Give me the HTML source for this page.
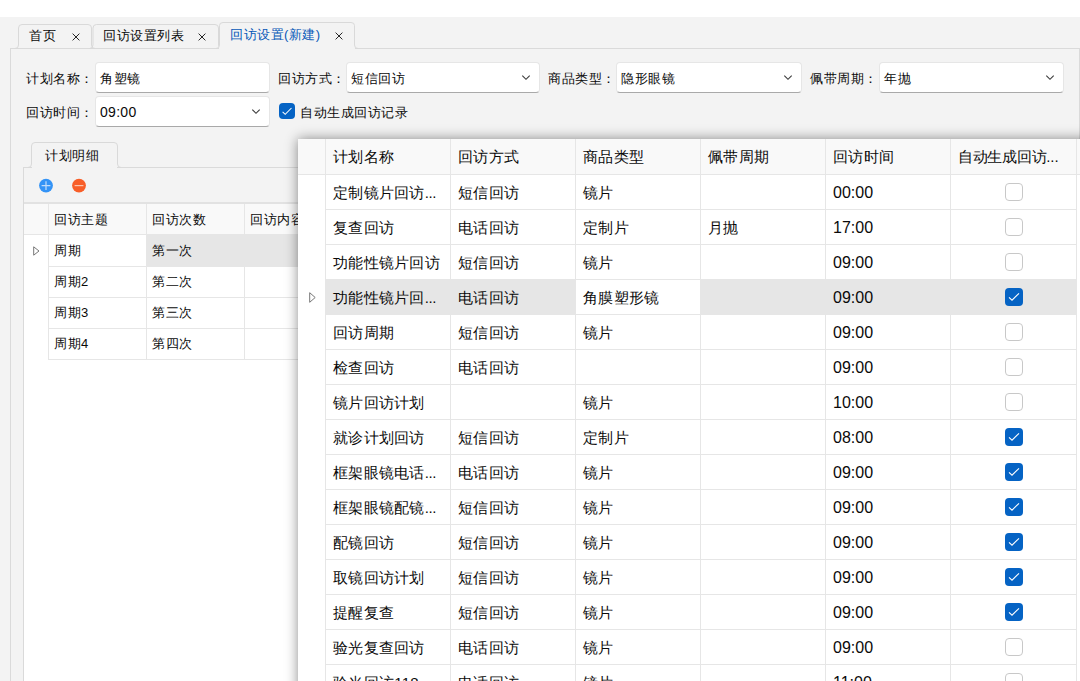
<!DOCTYPE html>
<html><head><meta charset="utf-8">
<style>
*{box-sizing:border-box;margin:0;padding:0}
html,body{width:1080px;height:681px;overflow:hidden}
body{position:relative;background:#f3f3f3;font-family:"Liberation Sans",sans-serif;font-size:13px;letter-spacing:0.5px;color:#0a0a0a}
.a{position:absolute}
.t{position:absolute;white-space:nowrap;line-height:16px;margin-left:-1px;margin-top:1px}
#topband{left:0;top:0;width:1080px;height:17px;background:#fff}
.tab{position:absolute;border:1px solid #dadada;border-bottom:none;border-radius:5px 5px 0 0;background:#f3f3f3}
#content{left:10px;top:48px;width:1070px;height:640px;border:1px solid #dadada;background:#f3f3f3}
.x{position:absolute;width:8px;height:8px}
.inp{position:absolute;background:#fff;border:1px solid #e6e6e6;border-bottom-color:#a9a9a9;border-radius:4px}
.chev{position:absolute}
.p{position:absolute;white-space:nowrap;line-height:18px;font-size:15px;letter-spacing:0.3px}
.cb{position:absolute;border-radius:4px}
.cb.on{background:#0563c4}
.cb.off{background:#fff;border:1px solid #c9c9c9}
</style></head><body>
<div class="a" id="topband"></div>
<div class="a" id="content"></div>
<svg class="a" style="left:0;top:0" width="1080" height="60" viewBox="0 0 1080 60">
<path d="M15 48.5Q18.5 48.5 18.5 45L18.5 28Q18.5 24.5 22 24.5L88 24.5Q91.5 24.5 91.5 28L91.5 45Q91.5 48.5 95 48.5" fill="none" stroke="#d9d9d9" stroke-width="1"/>
<path d="M89.5 48.5Q93 48.5 93 45L93 28Q93 24.5 96.5 24.5L215 24.5Q218.5 24.5 218.5 28L218.5 45Q218.5 48.5 222 48.5" fill="none" stroke="#d9d9d9" stroke-width="1"/>
<rect x="219" y="23" width="136" height="27" fill="#f3f3f3"/>
<path d="M216 48.5Q219.5 48.5 219.5 45L219.5 25.5Q219.5 22.5 223 22.5L351 22.5Q354.5 22.5 354.5 25.5L354.5 45Q354.5 48.5 358 48.5" fill="none" stroke="#d9d9d9" stroke-width="1"/>
</svg>

<!-- tabs -->



<div class="t" style="left:30px;top:27px">首页</div>
<div class="t" style="left:104px;top:27px">回访设置列表</div>
<div class="t" style="left:231px;top:26px;color:#0658b8">回访设置(新建)</div>
<svg class="x" style="left:72px;top:33px" viewBox="0 0 8 8"><path d="M0.6 0.6L7.4 7.4M7.4 0.6L0.6 7.4" stroke="#262626" stroke-width="1"/></svg>
<svg class="x" style="left:198px;top:33px" viewBox="0 0 8 8"><path d="M0.6 0.6L7.4 7.4M7.4 0.6L0.6 7.4" stroke="#262626" stroke-width="1"/></svg>
<svg class="x" style="left:335px;top:32px" viewBox="0 0 8 8"><path d="M0.6 0.6L7.4 7.4M7.4 0.6L0.6 7.4" stroke="#262626" stroke-width="1"/></svg>

<!-- form row 1 -->
<div class="t" style="left:27px;top:70px">计划名称：</div>
<div class="inp" style="left:95px;top:62px;width:175px;height:31px"></div>
<div class="t" style="left:101px;top:70px">角塑镜</div>

<div class="t" style="left:279px;top:70px">回访方式：</div>
<div class="inp" style="left:346px;top:62px;width:194px;height:31px"></div>
<div class="t" style="left:352px;top:70px">短信回访</div>
<svg class="chev" style="left:521px;top:74px" width="10" height="7" viewBox="0 0 10 7"><path d="M1.3 1.6L5 5.3L8.7 1.6" fill="none" stroke="#3a3a3a" stroke-width="1.1"/></svg>

<div class="t" style="left:549px;top:70px">商品类型：</div>
<div class="inp" style="left:616px;top:62px;width:186px;height:31px"></div>
<div class="t" style="left:622px;top:70px">隐形眼镜</div>
<svg class="chev" style="left:783px;top:74px" width="10" height="7" viewBox="0 0 10 7"><path d="M1.3 1.6L5 5.3L8.7 1.6" fill="none" stroke="#3a3a3a" stroke-width="1.1"/></svg>

<div class="t" style="left:811px;top:70px">佩带周期：</div>
<div class="inp" style="left:879px;top:62px;width:185px;height:31px"></div>
<div class="t" style="left:885px;top:70px">年抛</div>
<svg class="chev" style="left:1045px;top:74px" width="10" height="7" viewBox="0 0 10 7"><path d="M1.3 1.6L5 5.3L8.7 1.6" fill="none" stroke="#3a3a3a" stroke-width="1.1"/></svg>

<!-- form row 2 -->
<div class="t" style="left:27px;top:104px">回访时间：</div>
<div class="inp" style="left:95px;top:96px;width:175px;height:31px"></div>
<div class="t" style="left:101px;top:103px;font-size:14px;letter-spacing:0.3px">09:00</div>
<svg class="chev" style="left:251px;top:108px" width="10" height="7" viewBox="0 0 10 7"><path d="M1.3 1.6L5 5.3L8.7 1.6" fill="none" stroke="#3a3a3a" stroke-width="1.1"/></svg>
<div class="cb on" style="left:279px;top:103px;width:16px;height:16px"></div>
<svg class="a" style="left:279px;top:103px" width="16" height="16" viewBox="0 0 16 16"><path d="M3.6 8.8L6.2 11.3L12.5 5" fill="none" stroke="#fff" stroke-width="1.05"/></svg>
<div class="t" style="left:301px;top:104px">自动生成回访记录</div>


<div class="a" style="left:23px;top:167px;width:1100px;height:600px;border:1px solid #dadada;background:#f3f3f3"></div>
<svg class="a" style="left:0;top:130px" width="140" height="50" viewBox="0 130 140 50">
<rect x="32" y="143" width="85" height="26" fill="#f3f3f3"/>
<path d="M28 167.5Q31.5 167.5 31.5 164L31.5 146Q31.5 142.5 35 142.5L114 142.5Q117.5 142.5 117.5 146L117.5 164Q117.5 167.5 121 167.5" fill="none" stroke="#d9d9d9" stroke-width="1"/>
</svg>
<div class="t" style="left:46px;top:147px">计划明细</div>
<svg class="a" style="left:39px;top:178px" width="15" height="16" viewBox="0 0 15 16"><circle cx="7" cy="7.6" r="6.9" fill="#3393f6"/><path d="M2.6 7.6H11.4M7 3.2V12" stroke="#c0dcfb" stroke-width="1.2"/></svg>
<svg class="a" style="left:72px;top:178px" width="15" height="16" viewBox="0 0 15 16"><circle cx="7" cy="7.6" r="6.9" fill="#f85e28"/><path d="M2.6 7.6H11.4" stroke="#fcc4ad" stroke-width="1.2"/></svg>
<div class="a" style="left:24px;top:202px;width:1100px;height:500px;background:#fff;border-top:2px solid #e2e2e2"></div>
<div class="a" style="left:24px;top:204px;width:300px;height:31px;background:#f9f9f9;border-bottom:1px solid #e6e6e6"></div>
<div class="a" style="left:146px;top:235px;width:200px;height:31px;background:#e6e6e6"></div>
<div class="a" style="left:48px;top:204px;width:1px;height:156px;background:#e6e6e6"></div>
<div class="a" style="left:146px;top:204px;width:1px;height:156px;background:#e6e6e6"></div>
<div class="a" style="left:244px;top:204px;width:1px;height:156px;background:#e6e6e6"></div>
<div class="a" style="left:48px;top:266px;width:300px;height:1px;background:#e6e6e6"></div>
<div class="a" style="left:48px;top:297px;width:300px;height:1px;background:#e6e6e6"></div>
<div class="a" style="left:48px;top:328px;width:300px;height:1px;background:#e6e6e6"></div>
<div class="a" style="left:48px;top:359px;width:300px;height:1px;background:#e6e6e6"></div>
<div class="t" style="left:55px;top:211px">回访主题</div>
<div class="t" style="left:153px;top:211px">回访次数</div>
<div class="t" style="left:251px;top:211px">回访内容</div>
<div class="t" style="left:55px;top:242px">周期</div>
<div class="t" style="left:153px;top:242px">第一次</div>
<div class="t" style="left:55px;top:273px">周期2</div>
<div class="t" style="left:153px;top:273px">第二次</div>
<div class="t" style="left:55px;top:304px">周期3</div>
<div class="t" style="left:153px;top:304px">第三次</div>
<div class="t" style="left:55px;top:335px">周期4</div>
<div class="t" style="left:153px;top:335px">第四次</div>
<svg class="a" style="left:33px;top:246px" width="7" height="10" viewBox="0 0 7 10"><path d="M0.7 0.8L6 5L0.7 9.2Z" fill="none" stroke="#777" stroke-width="1"/></svg>
<div class="a" style="left:298px;top:139px;width:900px;height:600px;background:#fff;box-shadow:0 0 12px rgba(0,0,0,0.45)"></div>
<div class="a" style="left:298px;top:139px;width:900px;height:36px;background:#f9f9f9;border-bottom:1px solid #e6e6e6"></div>
<div class="a" style="left:325px;top:139px;width:1px;height:560px;background:#e6e6e6"></div>
<div class="a" style="left:450px;top:139px;width:1px;height:560px;background:#e6e6e6"></div>
<div class="a" style="left:575px;top:139px;width:1px;height:560px;background:#e6e6e6"></div>
<div class="a" style="left:700px;top:139px;width:1px;height:560px;background:#e6e6e6"></div>
<div class="a" style="left:825px;top:139px;width:1px;height:560px;background:#e6e6e6"></div>
<div class="a" style="left:950px;top:139px;width:1px;height:560px;background:#e6e6e6"></div>
<div class="a" style="left:1076px;top:139px;width:1px;height:560px;background:#e6e6e6"></div>
<div class="a" style="left:326px;top:209px;width:750px;height:1px;background:#e6e6e6"></div>
<div class="a" style="left:326px;top:244px;width:750px;height:1px;background:#e6e6e6"></div>
<div class="a" style="left:326px;top:279px;width:750px;height:1px;background:#e6e6e6"></div>
<div class="a" style="left:326px;top:314px;width:750px;height:1px;background:#e6e6e6"></div>
<div class="a" style="left:326px;top:349px;width:750px;height:1px;background:#e6e6e6"></div>
<div class="a" style="left:326px;top:384px;width:750px;height:1px;background:#e6e6e6"></div>
<div class="a" style="left:326px;top:419px;width:750px;height:1px;background:#e6e6e6"></div>
<div class="a" style="left:326px;top:454px;width:750px;height:1px;background:#e6e6e6"></div>
<div class="a" style="left:326px;top:489px;width:750px;height:1px;background:#e6e6e6"></div>
<div class="a" style="left:326px;top:524px;width:750px;height:1px;background:#e6e6e6"></div>
<div class="a" style="left:326px;top:559px;width:750px;height:1px;background:#e6e6e6"></div>
<div class="a" style="left:326px;top:594px;width:750px;height:1px;background:#e6e6e6"></div>
<div class="a" style="left:326px;top:629px;width:750px;height:1px;background:#e6e6e6"></div>
<div class="a" style="left:326px;top:664px;width:750px;height:1px;background:#e6e6e6"></div>
<div class="a" style="left:325px;top:279px;width:250px;height:36px;background:#e6e6e6"></div>
<div class="a" style="left:700px;top:279px;width:376px;height:36px;background:#e6e6e6"></div>
<div class="p" style="left:333px;top:148px">计划名称</div>
<div class="p" style="left:458px;top:148px">回访方式</div>
<div class="p" style="left:583px;top:148px">商品类型</div>
<div class="p" style="left:708px;top:148px">佩带周期</div>
<div class="p" style="left:833px;top:148px">回访时间</div>
<div class="p" style="left:958px;top:148px;letter-spacing:-0.3px">自动生成回访<span style="letter-spacing:0px">...</span></div>
<div class="p" style="left:333px;top:184px">定制镜片回访<span style="letter-spacing:-0.4px">...</span></div>
<div class="p" style="left:458px;top:184px">短信回访</div>
<div class="p" style="left:583px;top:184px">镜片</div>
<div class="p" style="left:833px;top:184px;font-size:16px;letter-spacing:0">00:00</div>
<svg class="a" style="left:1005px;top:183px" width="18" height="18" viewBox="0 0 18 18"><rect x="0.5" y="0.5" width="17" height="17" rx="3.5" fill="#fff" stroke="#c8c8c8"/></svg>
<div class="p" style="left:333px;top:219px">复查回访</div>
<div class="p" style="left:458px;top:219px">电话回访</div>
<div class="p" style="left:583px;top:219px">定制片</div>
<div class="p" style="left:708px;top:219px">月抛</div>
<div class="p" style="left:833px;top:219px;font-size:16px;letter-spacing:0">17:00</div>
<svg class="a" style="left:1005px;top:218px" width="18" height="18" viewBox="0 0 18 18"><rect x="0.5" y="0.5" width="17" height="17" rx="3.5" fill="#fff" stroke="#c8c8c8"/></svg>
<div class="p" style="left:333px;top:254px">功能性镜片回访</div>
<div class="p" style="left:458px;top:254px">短信回访</div>
<div class="p" style="left:583px;top:254px">镜片</div>
<div class="p" style="left:833px;top:254px;font-size:16px;letter-spacing:0">09:00</div>
<svg class="a" style="left:1005px;top:253px" width="18" height="18" viewBox="0 0 18 18"><rect x="0.5" y="0.5" width="17" height="17" rx="3.5" fill="#fff" stroke="#c8c8c8"/></svg>
<div class="p" style="left:333px;top:289px">功能性镜片回<span style="letter-spacing:-0.4px">...</span></div>
<div class="p" style="left:458px;top:289px">电话回访</div>
<div class="p" style="left:583px;top:289px">角膜塑形镜</div>
<div class="p" style="left:833px;top:289px;font-size:16px;letter-spacing:0">09:00</div>
<svg class="a" style="left:1005px;top:288px" width="18" height="18" viewBox="0 0 18 18"><rect x="0" y="0" width="18" height="18" rx="4" fill="#0563c4"/><path d="M4 9.4L7 12.2L14 5.3" fill="none" stroke="#fff" stroke-width="1.05"/></svg>
<div class="p" style="left:333px;top:324px">回访周期</div>
<div class="p" style="left:458px;top:324px">短信回访</div>
<div class="p" style="left:583px;top:324px">镜片</div>
<div class="p" style="left:833px;top:324px;font-size:16px;letter-spacing:0">09:00</div>
<svg class="a" style="left:1005px;top:323px" width="18" height="18" viewBox="0 0 18 18"><rect x="0.5" y="0.5" width="17" height="17" rx="3.5" fill="#fff" stroke="#c8c8c8"/></svg>
<div class="p" style="left:333px;top:359px">检查回访</div>
<div class="p" style="left:458px;top:359px">电话回访</div>
<div class="p" style="left:833px;top:359px;font-size:16px;letter-spacing:0">09:00</div>
<svg class="a" style="left:1005px;top:358px" width="18" height="18" viewBox="0 0 18 18"><rect x="0.5" y="0.5" width="17" height="17" rx="3.5" fill="#fff" stroke="#c8c8c8"/></svg>
<div class="p" style="left:333px;top:394px">镜片回访计划</div>
<div class="p" style="left:583px;top:394px">镜片</div>
<div class="p" style="left:833px;top:394px;font-size:16px;letter-spacing:0">10:00</div>
<svg class="a" style="left:1005px;top:393px" width="18" height="18" viewBox="0 0 18 18"><rect x="0.5" y="0.5" width="17" height="17" rx="3.5" fill="#fff" stroke="#c8c8c8"/></svg>
<div class="p" style="left:333px;top:429px">就诊计划回访</div>
<div class="p" style="left:458px;top:429px">短信回访</div>
<div class="p" style="left:583px;top:429px">定制片</div>
<div class="p" style="left:833px;top:429px;font-size:16px;letter-spacing:0">08:00</div>
<svg class="a" style="left:1005px;top:428px" width="18" height="18" viewBox="0 0 18 18"><rect x="0" y="0" width="18" height="18" rx="4" fill="#0563c4"/><path d="M4 9.4L7 12.2L14 5.3" fill="none" stroke="#fff" stroke-width="1.05"/></svg>
<div class="p" style="left:333px;top:464px">框架眼镜电话<span style="letter-spacing:-0.4px">...</span></div>
<div class="p" style="left:458px;top:464px">电话回访</div>
<div class="p" style="left:583px;top:464px">镜片</div>
<div class="p" style="left:833px;top:464px;font-size:16px;letter-spacing:0">09:00</div>
<svg class="a" style="left:1005px;top:463px" width="18" height="18" viewBox="0 0 18 18"><rect x="0" y="0" width="18" height="18" rx="4" fill="#0563c4"/><path d="M4 9.4L7 12.2L14 5.3" fill="none" stroke="#fff" stroke-width="1.05"/></svg>
<div class="p" style="left:333px;top:499px">框架眼镜配镜<span style="letter-spacing:-0.4px">...</span></div>
<div class="p" style="left:458px;top:499px">短信回访</div>
<div class="p" style="left:583px;top:499px">镜片</div>
<div class="p" style="left:833px;top:499px;font-size:16px;letter-spacing:0">09:00</div>
<svg class="a" style="left:1005px;top:498px" width="18" height="18" viewBox="0 0 18 18"><rect x="0" y="0" width="18" height="18" rx="4" fill="#0563c4"/><path d="M4 9.4L7 12.2L14 5.3" fill="none" stroke="#fff" stroke-width="1.05"/></svg>
<div class="p" style="left:333px;top:534px">配镜回访</div>
<div class="p" style="left:458px;top:534px">短信回访</div>
<div class="p" style="left:583px;top:534px">镜片</div>
<div class="p" style="left:833px;top:534px;font-size:16px;letter-spacing:0">09:00</div>
<svg class="a" style="left:1005px;top:533px" width="18" height="18" viewBox="0 0 18 18"><rect x="0" y="0" width="18" height="18" rx="4" fill="#0563c4"/><path d="M4 9.4L7 12.2L14 5.3" fill="none" stroke="#fff" stroke-width="1.05"/></svg>
<div class="p" style="left:333px;top:569px">取镜回访计划</div>
<div class="p" style="left:458px;top:569px">短信回访</div>
<div class="p" style="left:583px;top:569px">镜片</div>
<div class="p" style="left:833px;top:569px;font-size:16px;letter-spacing:0">09:00</div>
<svg class="a" style="left:1005px;top:568px" width="18" height="18" viewBox="0 0 18 18"><rect x="0" y="0" width="18" height="18" rx="4" fill="#0563c4"/><path d="M4 9.4L7 12.2L14 5.3" fill="none" stroke="#fff" stroke-width="1.05"/></svg>
<div class="p" style="left:333px;top:604px">提醒复查</div>
<div class="p" style="left:458px;top:604px">短信回访</div>
<div class="p" style="left:583px;top:604px">镜片</div>
<div class="p" style="left:833px;top:604px;font-size:16px;letter-spacing:0">09:00</div>
<svg class="a" style="left:1005px;top:603px" width="18" height="18" viewBox="0 0 18 18"><rect x="0" y="0" width="18" height="18" rx="4" fill="#0563c4"/><path d="M4 9.4L7 12.2L14 5.3" fill="none" stroke="#fff" stroke-width="1.05"/></svg>
<div class="p" style="left:333px;top:639px">验光复查回访</div>
<div class="p" style="left:458px;top:639px">电话回访</div>
<div class="p" style="left:583px;top:639px">镜片</div>
<div class="p" style="left:833px;top:639px;font-size:16px;letter-spacing:0">09:00</div>
<svg class="a" style="left:1005px;top:638px" width="18" height="18" viewBox="0 0 18 18"><rect x="0.5" y="0.5" width="17" height="17" rx="3.5" fill="#fff" stroke="#c8c8c8"/></svg>
<div class="p" style="left:333px;top:674px">验光回访118</div>
<div class="p" style="left:458px;top:674px">电话回访</div>
<div class="p" style="left:583px;top:674px">镜片</div>
<div class="p" style="left:833px;top:674px;font-size:16px;letter-spacing:0">11:00</div>
<svg class="a" style="left:1005px;top:673px" width="18" height="18" viewBox="0 0 18 18"><rect x="0.5" y="0.5" width="17" height="17" rx="3.5" fill="#fff" stroke="#c8c8c8"/></svg>
<svg class="a" style="left:309px;top:292px" width="7" height="11" viewBox="0 0 7 11"><path d="M0.7 0.7L6.2 5.5L0.7 10.3Z" fill="none" stroke="#777" stroke-width="1"/></svg>
</body></html>
